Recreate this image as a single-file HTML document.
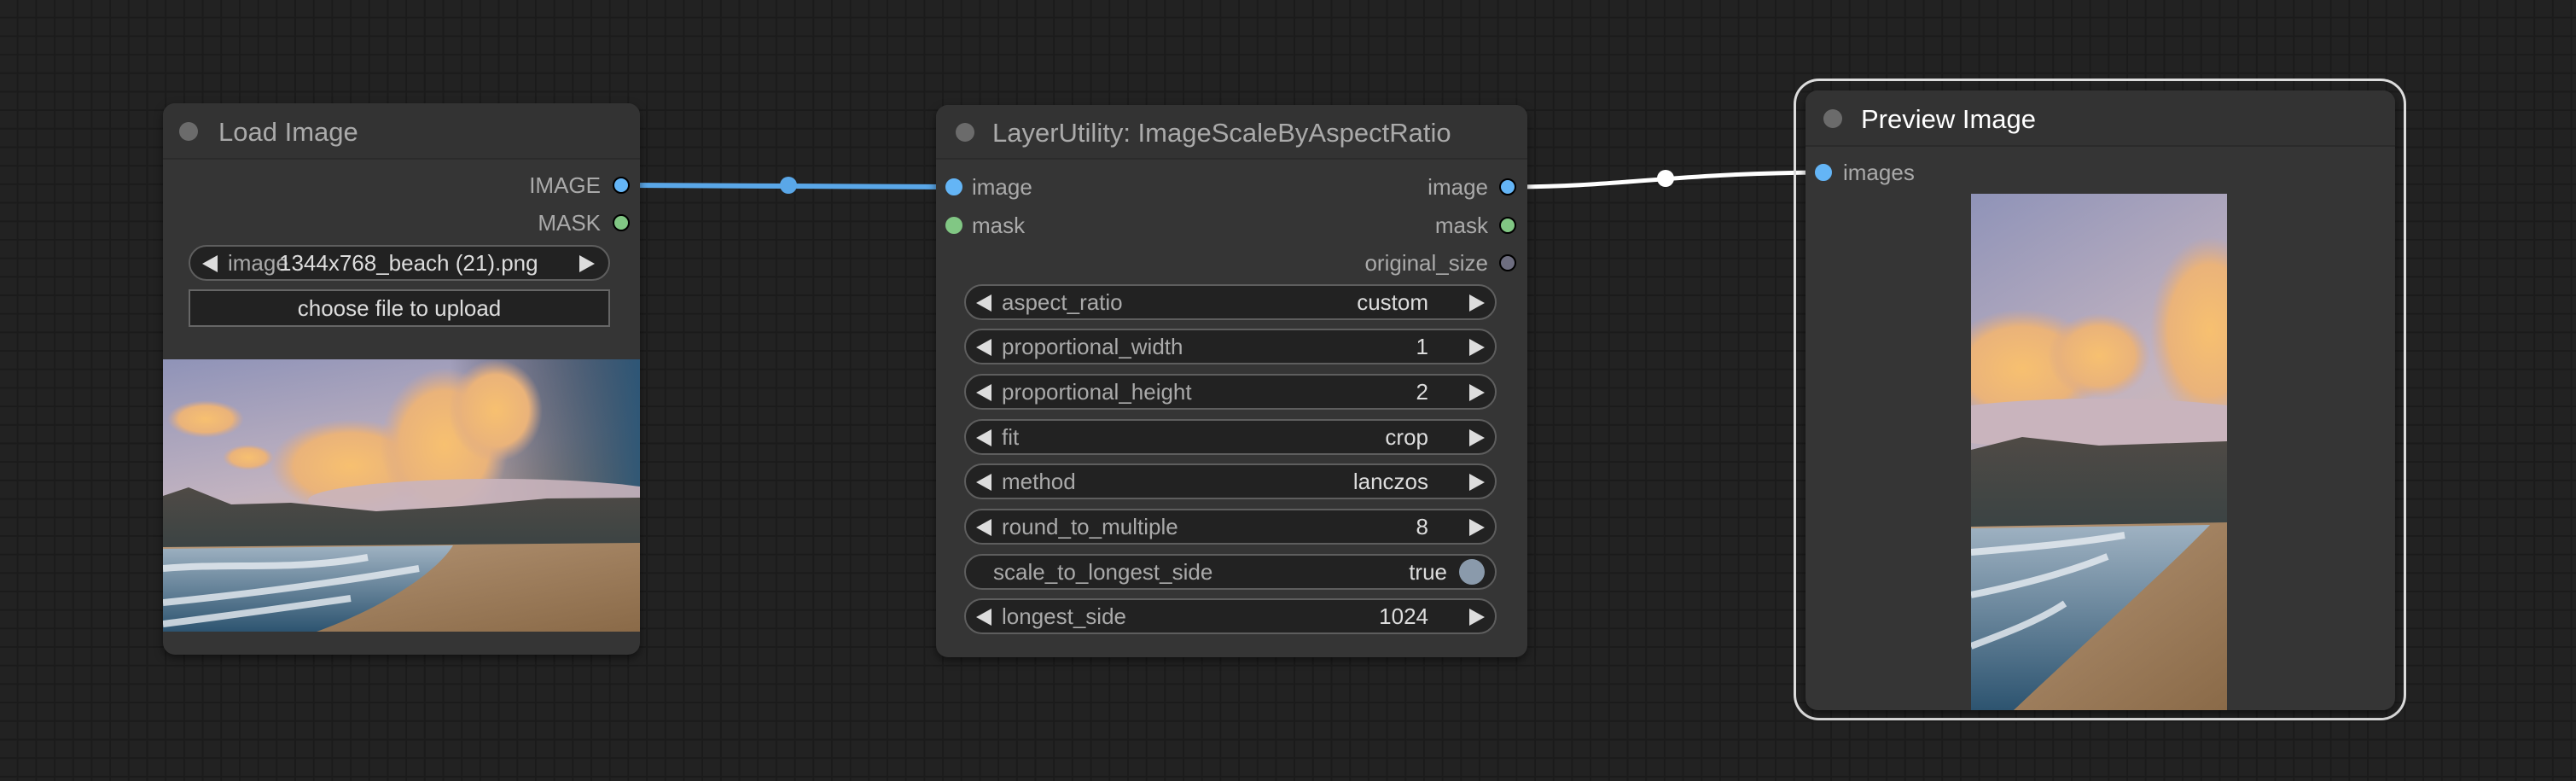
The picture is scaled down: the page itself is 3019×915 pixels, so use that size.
<!DOCTYPE html>
<html><head><meta charset="utf-8"><style>
*{margin:0;padding:0;box-sizing:border-box}
body{width:3019px;height:915px;overflow:hidden;background-color:#222;
background-image:linear-gradient(#1b1b1b 2px,transparent 2px),linear-gradient(90deg,#1b1b1b 2px,transparent 2px);
background-size:21.7px 21.7px;background-position:-2px -2px;
font-family:"Liberation Sans",sans-serif;position:relative}
.a{position:absolute}
.node{position:absolute;background:#353535;border-radius:14px;box-shadow:0 4px 10px rgba(0,0,0,.5)}
.title{position:absolute;left:0;right:0;top:0;border-bottom:2px solid #2b2b2b;border-radius:14px 14px 0 0;background:#333}
.tdot{position:absolute;width:22px;height:22px;border-radius:50%;background:#6b6b6b}
.tt{position:absolute;font-size:31px;color:#aaa;white-space:nowrap}
.lbl{position:absolute;font-size:26px;color:#aaa;white-space:nowrap;line-height:30px}
.dot{position:absolute;width:20px;height:20px;border-radius:50%;border:2.5px solid #000}
.w{position:absolute;height:42px;border:2px solid #5e5e5e;border-radius:21px;background:#222;font-size:26px;line-height:38px;color:#aaa;white-space:nowrap}
.w .v{position:absolute;color:#ddd}
.al,.ar{position:absolute;top:10px;width:0;height:0;border-top:10px solid transparent;border-bottom:10px solid transparent}
.al{border-right:18px solid #ddd}
.ar{border-left:18px solid #ddd}
</style></head><body>
<svg class="a" style="left:0;top:0" width="3019" height="915">
<path d="M728 217 C 900 217, 950 219, 1118 219" stroke="#5aa7e8" stroke-width="6" fill="none"/>
<circle cx="924" cy="217" r="10" fill="#5aa7e8"/>
<path d="M1767 219 C 1900 219, 1960 203, 2137 202" stroke="#fff" stroke-width="5" fill="none"/>
<circle cx="1952" cy="209" r="10" fill="#fff"/>
<defs>
<linearGradient id="sky" x1="0" y1="0" x2="0.3" y2="1"><stop offset="0" stop-color="#8f93b8"/><stop offset=".5" stop-color="#c2b3c0"/><stop offset="1" stop-color="#e8c29a"/></linearGradient>
<linearGradient id="skyr" x1="0" y1="0" x2="1" y2="0"><stop offset=".6" stop-color="#000" stop-opacity="0"/><stop offset="1" stop-color="#1f4d6e" stop-opacity=".9"/></linearGradient>
<linearGradient id="sea" x1="0" y1="0" x2="0" y2="1"><stop offset="0" stop-color="#9fb2c2"/><stop offset="1" stop-color="#2d5470"/></linearGradient>
<linearGradient id="sand" x1="0" y1="0" x2="1" y2="1"><stop offset="0" stop-color="#b89878"/><stop offset="1" stop-color="#8a6a48"/></linearGradient>
<linearGradient id="mtn" x1="0" y1="0" x2="0" y2="1"><stop offset="0" stop-color="#4f4a45"/><stop offset="1" stop-color="#3a4344"/></linearGradient>
<radialGradient id="cl" cx=".5" cy=".5" r=".5"><stop offset="0" stop-color="#f7c070"/><stop offset=".7" stop-color="#eab37a"/><stop offset="1" stop-color="#d9a88a" stop-opacity="0"/></radialGradient>
</defs>
</svg>

<!-- Load Image -->
<div class="node" style="left:191px;top:121px;width:559px;height:646px">
 <div class="title" style="height:66px"></div>
 <div class="tdot" style="left:19px;top:22px"></div>
 <div class="tt" style="left:65px;top:16px">Load Image</div>
 <div class="lbl" style="right:46px;top:81px">IMAGE</div>
 <div class="dot" style="left:527px;top:86px;background:#64b5f6"></div>
 <div class="lbl" style="right:46px;top:125px">MASK</div>
 <div class="dot" style="left:527px;top:130px;background:#81c784"></div>
 <div class="w" style="left:30px;top:166px;width:494px"><div class="al" style="left:14px"></div><span class="a" style="left:44px">image</span><span class="v" style="left:104px">1344x768_beach (21).png</span><div class="ar" style="left:456px"></div></div>
 <div class="a" style="left:30px;top:218px;width:494px;height:44px;border:2px solid #666;background:#222;color:#ddd;font-size:26px;line-height:40px;text-align:center">choose file to upload</div>
 <svg class="a" style="left:0;top:300px" width="559" height="319" viewBox="0 0 559 319">
  <rect width="559" height="319" fill="url(#sky)"/>
  <rect width="559" height="319" fill="url(#skyr)"/>
  <ellipse cx="50" cy="70" rx="45" ry="22" fill="url(#cl)"/>
  <ellipse cx="100" cy="115" rx="30" ry="15" fill="url(#cl)"/>
  <ellipse cx="220" cy="125" rx="95" ry="55" fill="url(#cl)"/>
  <ellipse cx="330" cy="100" rx="75" ry="90" fill="url(#cl)"/>
  <ellipse cx="390" cy="60" rx="55" ry="60" fill="url(#cl)"/>
  <ellipse cx="390" cy="165" rx="220" ry="25" fill="#c9b4bd" opacity=".9"/>
  <path d="M0 160 L30 150 L80 170 L150 168 L250 178 L350 172 L450 163 L559 162 L559 220 L0 225Z" fill="url(#mtn)"/>
  <path d="M0 220 L559 215 L559 319 L0 319Z" fill="url(#sand)"/>
  <path d="M0 222 L340 218 C320 250 260 290 180 319 L0 319Z" fill="url(#sea)"/>
  <path d="M0 245 C80 238 150 248 240 232 M0 285 C100 275 200 262 300 245 M0 310 C80 300 150 290 220 280" stroke="#e8eef2" stroke-width="8" fill="none" opacity=".8"/>
 </svg>
</div>

<!-- Middle node -->
<div class="node" style="left:1097px;top:123px;width:693px;height:647px">
 <div class="title" style="height:64px"></div>
 <div class="tdot" style="left:23px;top:21px"></div>
 <div class="tt" style="left:66px;top:15px">LayerUtility: ImageScaleByAspectRatio</div>
 <div class="dot" style="left:11px;top:86px;background:#64b5f6;border-color:#64b5f6"></div>
 <div class="lbl" style="left:42px;top:81px">image</div>
 <div class="dot" style="left:11px;top:131px;background:#81c784;border-color:#81c784"></div>
 <div class="lbl" style="left:42px;top:126px">mask</div>
 <div class="lbl" style="right:46px;top:81px">image</div>
 <div class="dot" style="left:660px;top:86px;background:#64b5f6"></div>
 <div class="lbl" style="right:46px;top:126px">mask</div>
 <div class="dot" style="left:660px;top:131px;background:#81c784"></div>
 <div class="lbl" style="right:46px;top:170px">original_size</div>
 <div class="dot" style="left:660px;top:175px;background:#6e6e80"></div>
</div>
<div class="w" style="left:1130px;top:333px;width:624px"><div class="al" style="left:12px"></div><span class="a" style="left:42px">aspect_ratio</span><span class="v" style="right:78px">custom</span><div class="ar" style="right:12px"></div></div>
<div class="w" style="left:1130px;top:385px;width:624px"><div class="al" style="left:12px"></div><span class="a" style="left:42px">proportional_width</span><span class="v" style="right:78px">1</span><div class="ar" style="right:12px"></div></div>
<div class="w" style="left:1130px;top:438px;width:624px"><div class="al" style="left:12px"></div><span class="a" style="left:42px">proportional_height</span><span class="v" style="right:78px">2</span><div class="ar" style="right:12px"></div></div>
<div class="w" style="left:1130px;top:491px;width:624px"><div class="al" style="left:12px"></div><span class="a" style="left:42px">fit</span><span class="v" style="right:78px">crop</span><div class="ar" style="right:12px"></div></div>
<div class="w" style="left:1130px;top:543px;width:624px"><div class="al" style="left:12px"></div><span class="a" style="left:42px">method</span><span class="v" style="right:78px">lanczos</span><div class="ar" style="right:12px"></div></div>
<div class="w" style="left:1130px;top:596px;width:624px"><div class="al" style="left:12px"></div><span class="a" style="left:42px">round_to_multiple</span><span class="v" style="right:78px">8</span><div class="ar" style="right:12px"></div></div>
<div class="w" style="left:1130px;top:649px;width:624px"><span class="a" style="left:32px">scale_to_longest_side</span><span class="v" style="right:56px">true</span><div class="a" style="right:12px;top:4px;width:30px;height:30px;border-radius:50%;background:#8a9aab"></div></div>
<div class="w" style="left:1130px;top:701px;width:624px"><div class="al" style="left:12px"></div><span class="a" style="left:42px">longest_side</span><span class="v" style="right:78px">1024</span><div class="ar" style="right:12px"></div></div>

<!-- Preview -->
<div class="a" style="left:2102px;top:92px;width:718px;height:752px;border:3px solid #ddd;border-radius:30px"></div>
<div class="node" style="left:2116px;top:106px;width:691px;height:726px">
 <div class="title" style="height:66px"></div>
 <div class="tdot" style="left:21px;top:22px"></div>
 <div class="tt" style="left:65px;top:16px;color:#fff">Preview Image</div>
 <div class="dot" style="left:11px;top:86px;background:#64b5f6;border-color:#64b5f6"></div>
 <div class="lbl" style="left:44px;top:81px">images</div>
 <svg class="a" style="left:194px;top:121px" width="300" height="605" viewBox="0 0 300 605">
  <rect width="300" height="605" fill="url(#sky)"/>
  <ellipse cx="60" cy="205" rx="95" ry="70" fill="url(#cl)"/>
  <ellipse cx="150" cy="190" rx="60" ry="50" fill="url(#cl)"/>
  <ellipse cx="280" cy="160" rx="70" ry="110" fill="url(#cl)"/>
  <ellipse cx="150" cy="270" rx="220" ry="30" fill="#c9b4bd"/>
  <path d="M0 300 L60 285 L150 295 L300 290 L300 395 L0 395Z" fill="url(#mtn)"/>
  <path d="M0 390 L300 385 L300 605 L0 605Z" fill="url(#sand)"/>
  <path d="M0 392 L280 388 C230 440 140 520 50 605 L0 605Z" fill="url(#sea)"/>
  <path d="M0 420 C60 415 120 410 180 400 M0 470 C50 460 110 445 160 425 M0 530 C40 515 80 500 110 480" stroke="#e8eef2" stroke-width="8" fill="none" opacity=".8"/>
 </svg>
</div>
</body></html>
